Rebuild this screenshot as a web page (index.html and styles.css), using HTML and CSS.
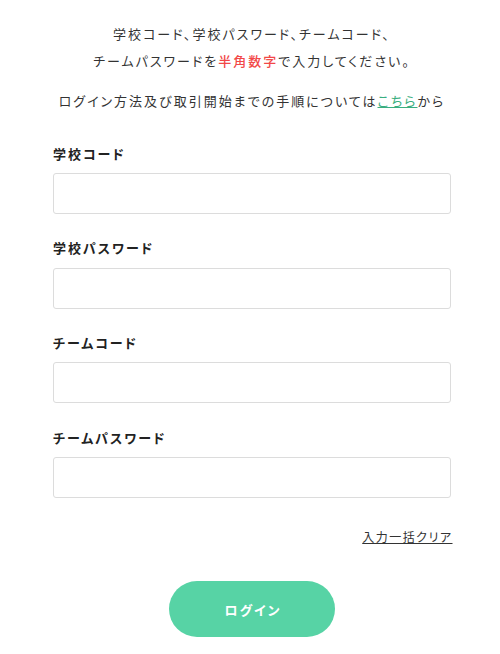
FILE: index.html
```html
<!DOCTYPE html>
<html lang="ja">
<head>
<meta charset="utf-8">
<title>ログイン</title>
<link rel="stylesheet" href="styles.css">
</head>
<body>
<main class="page">
  <div class="intro">
    <p class="intro-para">学校コード、学校パスワード、チームコード、<br>チームパスワードを<span class="em-red">半角数字</span>で入力してください。</p>
    <p class="intro-para">ログイン方法及び取引開始までの手順については<a class="link-green" href="#">こちら</a>から</p>
  </div>
  <form class="form">
    <div class="field">
      <label class="field-label">学校コード</label>
      <input class="field-input" type="text">
    </div>
    <div class="field">
      <label class="field-label">学校パスワード</label>
      <input class="field-input" type="password">
    </div>
    <div class="field">
      <label class="field-label">チームコード</label>
      <input class="field-input" type="text">
    </div>
    <div class="field">
      <label class="field-label">チームパスワード</label>
      <input class="field-input" type="password">
    </div>
    <div class="clear-row">
      <a class="clear-link" href="#">入力一括クリア</a>
    </div>
    <div class="submit-row">
      <button class="login-btn" type="button">ログイン</button>
    </div>
  </form>
</main>
</body>
</html>
```

FILE: styles.css
```css
* { box-sizing: border-box; }
html, body { margin: 0; padding: 0; background: #fff; }
body {
  font-family: "Noto Sans CJK JP", "Noto Sans", sans-serif;
  font-feature-settings: "palt";
  color: #333;
  font-size: 13px;
}
.page {
  width: 398px;
  margin-left: 53px;
  padding-top: 20px;
}
.intro {
  text-align: center;
  display: flex;
  flex-direction: column;
  gap: 12.5px;
}
.intro-para {
  margin: 0;
  line-height: 27px;
  letter-spacing: 2px;
}
.em-red {
  color: #f24848;
  font-weight: 500;
}
.link-green {
  color: #3aae80;
  font-weight: 400;
  text-decoration: underline;
}
.form {
  margin-top: 30px;
  display: flex;
  flex-direction: column;
}
.field {
  display: flex;
  flex-direction: column;
  gap: 9.5px;
  margin-bottom: 24.2px;
}
.field-label {
  font-weight: 700;
  line-height: 20px;
  letter-spacing: 2px;
  color: #222;
}
.field-input {
  height: 41px;
  border: 1px solid #dcdcdc;
  border-radius: 3px;
  padding: 0 10px;
  font-size: 14px;
  background: #fff;
  outline: none;
}
.clear-row {
  display: flex;
  justify-content: flex-end;
  margin-top: 5px;
}
.clear-link {
  font-size: 12px;
  line-height: 20px;
  letter-spacing: 1.5px;
  margin-right: -1.5px;
  color: #333;
  text-decoration: underline;
}
.submit-row {
  display: flex;
  justify-content: center;
  margin-top: 34px;
}
.login-btn {
  width: 166px;
  height: 56px;
  border: none;
  border-radius: 28px;
  background: #57d3a5;
  color: #fff;
  font-family: inherit;
  font-feature-settings: "palt";
  font-size: 13px;
  font-weight: 700;
  letter-spacing: 2px;
  padding: 0 0 0 2px;
  cursor: pointer;
}
```
